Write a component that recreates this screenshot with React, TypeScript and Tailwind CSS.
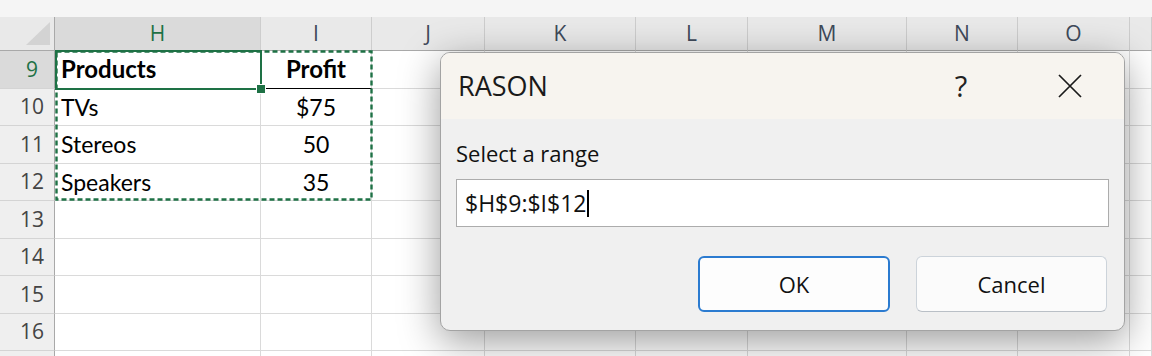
import React from "react";

const COLS = ["H", "I", "J", "K", "L", "M", "N", "O", ""];
const ROWS = [9, 10, 11, 12, 13, 14, 15, 16, 17];

const data: Record<number, [string, string]> = {
  9: ["Products", "Profit"],
  10: ["TVs", "$75"],
  11: ["Stereos", "50"],
  12: ["Speakers", "35"],
};

const ui = "font-['Open_Sans','Noto_Sans',sans-serif]";
const cellFont = "font-['Lato','Open_Sans',sans-serif]";

function Sheet() {
  return (
    <div className="relative">
      <div className="h-[17px] bg-[#f5f5f5]" />
      <div className="grid grid-cols-[55px_206px_111px_113px_151px_112px_159px_111px_112px_1fr]">
        {/* corner */}
        <div className="relative h-[34px] border-r border-b border-[#a9a9a9] bg-[#e9e9e9]">
          <svg className="absolute right-[4px] bottom-[5px]" width="24" height="23" viewBox="0 0 24 23">
            <polygon points="24,0 24,23 0,23" fill="#d3d3d3" />
          </svg>
        </div>
        {COLS.map((c, i) => (
          <div
            key={"h" + i}
            className={
              "flex h-[34px] items-center justify-center border-r border-b border-r-[#cdcdcd] border-b-[#a9a9a9] text-[21px] " +
              ui +
              (c === "H" ? " bg-[#dadada] text-[#1e7145]" : " bg-[#e9e9e9] text-[#3f4a5a]")
            }
          >
            {c}
          </div>
        ))}
        {ROWS.map((r) => (
          <React.Fragment key={r}>
            <div
              className={
                "flex h-[37.5px] items-center justify-center pl-[10px] border-r border-b border-r-[#a9a9a9] border-b-[#d4d4d4] text-[21px] " +
                ui +
                (r === 9 ? " bg-[#dadada] text-[#1e7145]" : " bg-[#efefef] text-[#444]")
              }
            >
              {r < 17 ? r : ""}
            </div>
            {COLS.map((c, i) => {
              const v = data[r];
              const bold = r === 9;
              let text = "";
              if (v && i === 0) text = v[0];
              if (v && i === 1) text = v[1];
              return (
                <div
                  key={r + "-" + i}
                  className={
                    "flex h-[37.5px] items-center border-r border-b border-[#dadada] bg-white text-black " +
                    cellFont +
                    (bold ? " text-[24px] font-bold" : " text-[23px]") +
                    (i === 1 ? " justify-center" : " pl-[6px]") +
                    (r === 9 && i === 1 ? " border-b-[1.5px] border-b-black" : "")
                  }
                >
                  {text}
                </div>
              );
            })}
          </React.Fragment>
        ))}
      </div>

      {/* copy marquee H9:I12 */}
      <svg className="pointer-events-none absolute left-[55px] top-[50px]" width="319" height="152">
        <rect x="1.5" y="1.5" width="315" height="148" fill="none" stroke="#1e7145" strokeWidth="2.4" strokeDasharray="5 3" />
      </svg>
      {/* active cell H9 */}
      <div className="pointer-events-none absolute left-[55px] top-[50px] h-[40px] w-[207px] border-2 border-[#1e7145]" />
      <div className="pointer-events-none absolute left-[256px] top-[84px] h-[10px] w-[10px] border border-white bg-[#1e7145]" />
    </div>
  );
}

function Dialog() {
  return (
    <div
      className={
        "absolute left-[440px] top-[52px] w-[685px] overflow-hidden rounded-[10px] border border-[#a3a3a3] bg-[#f0f0f0] shadow-[0_10px_40px_rgba(0,0,0,0.4)] " +
        ui
      }
    >
      <div className="flex h-[66px] items-center bg-[#f7f4ef]">
        <div className="flex-1 pl-[17px] text-[27px] text-[#1a1a1a]">RASON</div>
        <div className="flex h-full w-[110px] items-center justify-center text-[29px] text-[#222]">?</div>
        <div className="flex h-full w-[108px] items-center justify-center">
          <svg width="24" height="24" viewBox="0 0 24 24">
            <path d="M1 1 L23 23 M23 1 L1 23" stroke="#1a1a1a" strokeWidth="1.7" fill="none" />
          </svg>
        </div>
      </div>
      <div className="px-[15px] pt-[20px] pb-[18px]">
        <div className="h-[28px] text-[22px] leading-[28px] text-[#111]">Select a range</div>
        <div className="mt-[12px] flex h-[48px] items-center border border-[#acacac] bg-white pl-[8px]">
          <span className="text-[23px] text-[#111]">$H$9:$I$12</span>
          <span className="ml-[1px] h-[27px] w-[1.5px] bg-black" />
        </div>
        <div className="mt-[29px] flex justify-end gap-[26px] pr-[2px]">
          <div className="flex h-[56px] w-[192px] items-center justify-center rounded-[6px] border-2 border-[#2b7bd0] bg-[#fdfdfd] text-[22px] text-[#111]">
            OK
          </div>
          <div className="flex h-[56px] w-[191px] items-center justify-center rounded-[6px] border border-[#ccd3da] border-b-[#b9bfc6] bg-[#fbfbfb] text-[22px] text-[#111]">
            Cancel
          </div>
        </div>
      </div>
    </div>
  );
}

export default function App() {
  return (
    <div className="relative h-[356px] w-[1152px] overflow-hidden bg-white">
      <Sheet />
      <Dialog />
    </div>
  );
}
